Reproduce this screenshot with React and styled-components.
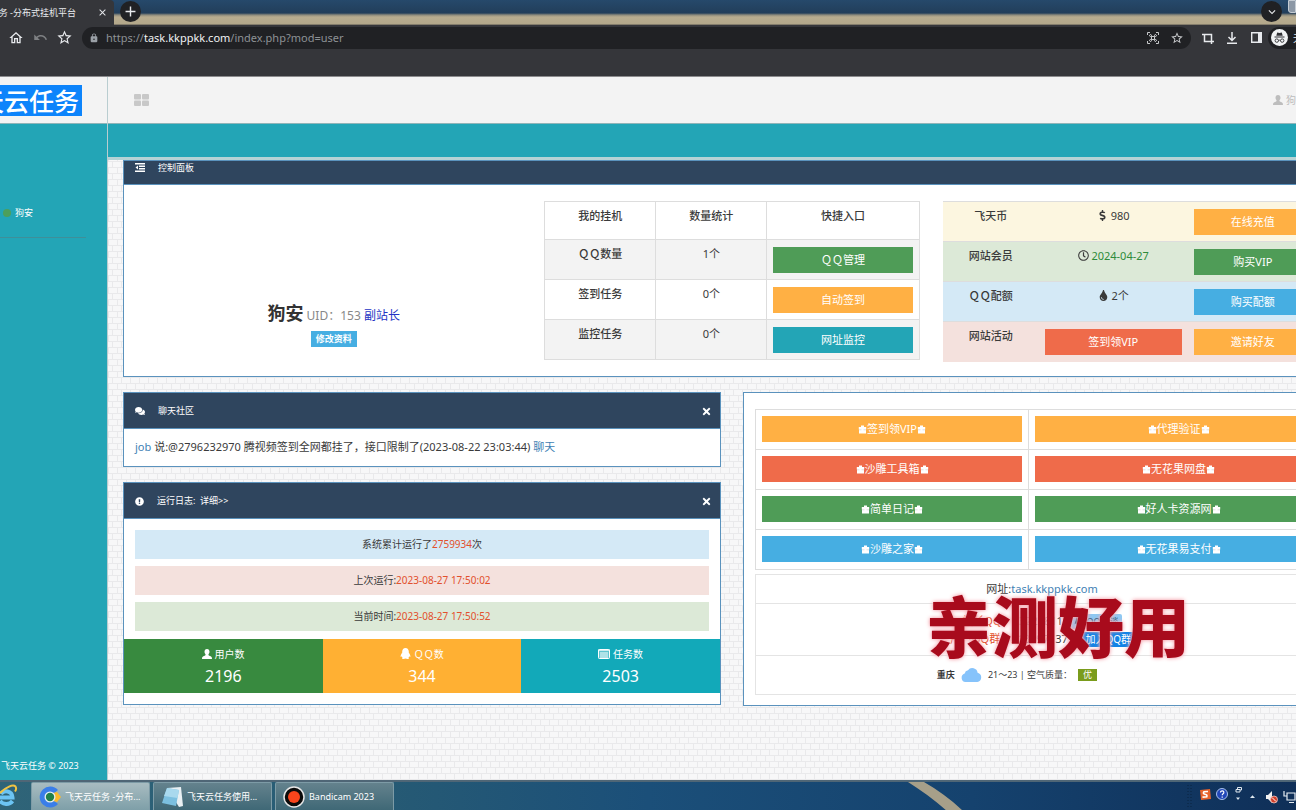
import styled, { createGlobalStyle } from "styled-components";
import {
    FaComments, FaDollarSign, FaExclamationCircle, FaQq, FaRegClock, FaTimes, FaTint
} from "react-icons/fa";
import {
    MdAdd, MdClose, MdExpandMore, MdLock, MdOutlineHome, MdStarBorder, MdUndo
} from "react-icons/md";

const colors = {
    teal: "#23a5b6",
    navy: "#2f455e",
    border: "#5a92bd",
    green: "#4f9c57",
    orange: "#ffb044",
    red: "#ef6b4a",
    blue: "#46aee2",
    link: "#3f7fb4"
}

const hangups = [
    { name: "ＱＱ数量", count: 1, action: "ＱＱ管理", color: colors.green },
    { name: "签到任务", count: 0, action: "自动签到", color: colors.orange },
    { name: "监控任务", count: 0, action: "网址监控", color: colors.teal }
]

const links = [
    [["签到领VIP", colors.orange], ["代理验证", colors.orange]],
    [["沙雕工具箱", colors.red], ["无花果网盘", colors.red]],
    [["简单日记", colors.green], ["好人卡资源网", colors.green]],
    [["沙雕之家", colors.blue], ["无花果易支付", colors.blue]]
]

export default function App() {
    return (
        <Screen>
            <GlobalStyle />
            <BrowserBar />
            <Page>
                <Sidebar />
                <Main />
            </Page>
            <Taskbar />
        </Screen>
    )
}

function BrowserBar() {
    return (
        <header>
            <TabStrip>
                <Tab>
                    <TabTitle><span>飞天云任务 -分布式挂机平台</span></TabTitle>
                    <PlainButton aria-label="关闭标签页"><MdClose size={11} /></PlainButton>
                </Tab>
                <RoundButton aria-label="新标签页"><MdAdd size={17} /></RoundButton>
                <StripEnd>
                    <RoundButton aria-label="搜索标签页"><MdExpandMore size={14} /></RoundButton>
                    <WindowButton aria-label="最小化" />
                </StripEnd>
            </TabStrip>
            <Toolbar>
                <ToolButton aria-label="主页"><MdOutlineHome size={16} /></ToolButton>
                <ToolButton aria-label="撤销" $dim><MdUndo size={15} /></ToolButton>
                <ToolButton aria-label="收藏夹"><MdStarBorder size={17} /></ToolButton>
                <AddressBar>
                    <MdLock size={10} />
                    <Url>https://<b>task.kkppkk.com</b>/index.php?mod=user</Url>
                    <ScanIcon />
                    <MdStarBorder size={14} />
                </AddressBar>
                <ToolButton aria-label="截图"><CropIcon /></ToolButton>
                <ToolButton aria-label="下载"><DownloadIcon /></ToolButton>
                <ToolButton aria-label="侧边栏"><SidePanelIcon /></ToolButton>
                <Profile><IncognitoIcon /><span>无痕</span></Profile>
            </Toolbar>
        </header>
    )
}

function Sidebar() {
    return (
        <Side>
            <LogoCell><Logo href="#"><span>飞天云任务</span></Logo></LogoCell>
            <SideBody>
                <SideUser><Dot />狗安</SideUser>
                <SideFooter>飞天云任务 © 2023</SideFooter>
            </SideBody>
        </Side>
    )
}

function Main() {
    return (
        <MainArea>
            <NavBar>
                <MenuButton aria-label="菜单"><GridIcon /></MenuButton>
                <NavUser href="#"><UserIcon size={10} /><span>狗安</span></NavUser>
            </NavBar>
            <TealBar />
            <Content>
                <Panel>
                    <PanelHead $short>
                        <IndentIcon />
                        <h2>控制面板</h2>
                    </PanelHead>
                    <Dashboard>
                        <ProfileCard />
                        <HangupTable />
                        <AccountTable />
                    </Dashboard>
                </Panel>
                <Columns>
                    <Stack>
                        <ChatPanel />
                        <LogPanel />
                    </Stack>
                    <LinksPanel />
                </Columns>
            </Content>
        </MainArea>
    )
}

function ProfileCard() {
    return (
        <Card>
            <UserLine><b>狗安</b> <span>UID：153</span> <a href="#">副站长</a></UserLine>
            <EditLink href="#">修改资料</EditLink>
        </Card>
    )
}

function HangupTable() {
    return (
        <Table $bordered>
            <thead>
                <HeadRow>
                    <NameCell $w={111}>我的挂机</NameCell>
                    <NameCell $w={111}>数量统计</NameCell>
                    <NameCell>快捷入口</NameCell>
                </HeadRow>
            </thead>
            <tbody>
                {hangups.map((item, i) => (
                    <Row key={item.name} $bg={i % 2 === 0 ? "#f3f3f3" : "#fff"}>
                        <NameCell>{item.name}</NameCell>
                        <ValueCell>{item.count}个</ValueCell>
                        <ActionCell><Button href="#" $bg={item.color}>{item.action}</Button></ActionCell>
                    </Row>
                ))}
            </tbody>
        </Table>
    )
}

function AccountTable() {
    return (
        <Table>
            <tbody>
                <Row $bg="#fcf6e0">
                    <NameCell $w={96}>飞天币</NameCell>
                    <ValueCell $w={149}><FaDollarSign size={11} /> 980</ValueCell>
                    <ActionCell><Button href="#" $bg={colors.orange}>在线充值</Button></ActionCell>
                </Row>
                <Row $bg="#dce9d7">
                    <NameCell>网站会员</NameCell>
                    <ValueCell><FaRegClock size={11} /> <Expiry>2024-04-27</Expiry></ValueCell>
                    <ActionCell><Button href="#" $bg={colors.green}>购买VIP</Button></ActionCell>
                </Row>
                <Row $bg="#d4e9f6">
                    <NameCell>ＱＱ配额</NameCell>
                    <ValueCell><FaTint size={11} /> 2个</ValueCell>
                    <ActionCell><Button href="#" $bg={colors.blue}>购买配额</Button></ActionCell>
                </Row>
                <Row $bg="#f4e1dd">
                    <NameCell>网站活动</NameCell>
                    <ActionCell><Button href="#" $bg={colors.red}>签到领VIP</Button></ActionCell>
                    <ActionCell><Button href="#" $bg={colors.orange}>邀请好友</Button></ActionCell>
                </Row>
            </tbody>
        </Table>
    )
}

function ChatPanel() {
    return (
        <Panel>
            <PanelHead>
                <FaComments size={10} />
                <h2>聊天社区</h2>
                <CloseButton aria-label="关闭"><FaTimes size={11} /></CloseButton>
            </PanelHead>
            <ChatLine>
                <a href="#">job</a> 说:@2796232970 腾视频签到全网都挂了，接口限制了(2023-08-22 23:03:44) <a href="#">聊天</a>
            </ChatLine>
        </Panel>
    )
}

function LogPanel() {
    return (
        <Panel>
            <PanelHead>
                <FaExclamationCircle size={9} />
                <h2>运行日志:&nbsp; 详细&gt;&gt;</h2>
                <CloseButton aria-label="关闭"><FaTimes size={11} /></CloseButton>
            </PanelHead>
            <Alerts>
                <Alert $bg="#d4e9f6">系统累计运行了<em>2759934</em>次</Alert>
                <Alert $bg="#f4e1dd">上次运行:<em>2023-08-27 17:50:02</em></Alert>
                <Alert $bg="#dce9d7">当前时间:<em>2023-08-27 17:50:52</em></Alert>
            </Alerts>
            <Stats>
                <Stat $bg="#388a3f"><p><UserIcon size={10} /> 用户数</p><strong>2196</strong></Stat>
                <Stat $bg="#ffb033"><p><PenguinIcon /> ＱＱ数</p><strong>344</strong></Stat>
                <Stat $bg="#12a9b9"><p><ListIcon /> 任务数</p><strong>2503</strong></Stat>
            </Stats>
        </Panel>
    )
}

function LinksPanel() {
    return (
        <Panel>
            <LinksBody>
                <Table $bordered>
                    <tbody>
                        {links.map((pair) => (
                            <Row key={pair[0][0]} $bg="#fff">
                                {pair.map(([label, color], i) => (
                                    <ActionCell key={label} $w={i === 0 ? 273 : undefined}>
                                        <Button href="#" $bg={color}><BagIcon />{label}<BagIcon /></Button>
                                    </ActionCell>
                                ))}
                            </Row>
                        ))}
                    </tbody>
                </Table>
                <Info>
                    <SiteRow>网址:<a href="#">task.kkppkk.com</a></SiteRow>
                    <ContactRow>
                        <div><em>站长QQ</em>：232228119<ChatBadge href="#"><FaQq size={10} /> QQ交谈</ChatBadge></div>
                        <div><em>用户QQ群</em>：213097137<JoinBadge href="#"><FaQq size={10} /> 加入QQ群</JoinBadge></div>
                    </ContactRow>
                    <WeatherRow>
                        <b>重庆</b>
                        <CloudIcon />
                        <span>21～23 | 空气质量：</span>
                        <Quality>优</Quality>
                    </WeatherRow>
                    <Stamp>亲测好用</Stamp>
                </Info>
            </LinksBody>
        </Panel>
    )
}

function Taskbar() {
    return (
        <Bar>
            <StartButton aria-label="Internet Explorer"><IeIcon /></StartButton>
            <TaskButton $active><ChromeIcon /><span>飞天云任务 -分布...</span></TaskButton>
            <TaskButton><NoteIcon /><span>飞天云任务使用...</span></TaskButton>
            <TaskButton><RecordIcon /><span>Bandicam 2023</span></TaskButton>
            <Streak viewBox="0 0 80 30" aria-hidden="true">
                <path d="M6 0h16c14 8 28 18 40 30H46C34 19 20 9 6 0z" fill="#a79f89" />
            </Streak>
            <Tray />
        </Bar>
    )
}

function Tray() {
    return (
        <TrayIcons viewBox="0 0 110 30" aria-label="通知区域">
            <path d="M2 3v22M5 3v22" stroke="#0a2440" strokeWidth="1" strokeDasharray="1 2" />
            <path d="M14 8l10-1 1 10-10 1z" fill="#e8622a" />
            <path d="M22 9.500l-4 .3q-1.500 2 1 2.400t1.800 2.500l-4.300.4" fill="none" stroke="#fff" strokeWidth="1.600" />
            <circle cx="36" cy="12" r="5.500" fill="#2147b8" stroke="#a9c2ea" />
            <path d="M34.500 10.500c0-2.300 3.500-2.200 3.300 0 0 1.300-1.600 1.300-1.600 2.700M36.200 14.500v1.300" fill="none" stroke="#fff" strokeWidth="1.200" />
            <path d="M50 7.500h4v2.500h-4zM51.500 7.500v-2h4v2.500h-1.500" fill="none" stroke="#dfe8ef" />
            <path d="M50 15.500h4l-2 2.500zM64 16h5l-2.500-2.800z" fill="#dfe8ef" />
            <path d="M80 13h2l4-4v12l-4-4h-2z" fill="#f1f1f1" />
            <circle cx="88" cy="17.500" r="3.500" fill="#d2402b" stroke="#f3c9c2" strokeWidth=".8" />
            <path d="M86 15.500l4 4" stroke="#fff" />
            <path d="M101 11h8v7h-8zM103 20.500h5M98 11v3h3M98 9v3" fill="none" stroke="#e6edf3" strokeWidth="1.200" />
        </TrayIcons>
    )
}

function GridIcon() {
    return (
        <svg width="15" height="12" viewBox="0 0 15 12" fill="#c8c8c8">
            <rect width="7" height="5.500" rx="1" />
            <rect x="8" width="7" height="5.500" rx="1" />
            <rect y="6.500" width="7" height="5.500" rx="1" />
            <rect x="8" y="6.500" width="7" height="5.500" rx="1" />
        </svg>
    )
}

function UserIcon({ size }) {
    return (
        <svg width={size} height={size} viewBox="0 0 10 10" fill="currentColor">
            <path d="M5 0c1.700 0 2.500 1.200 2.500 2.800 0 1.100-.5 2-1.100 2.600.1.900.5 1.200 1.700 1.600C9.500 7.500 10 8 10 10H0c0-2 .5-2.500 1.900-3 1.200-.4 1.600-.7 1.700-1.600C3 4.800 2.500 3.900 2.500 2.800 2.500 1.200 3.300 0 5 0z" />
        </svg>
    )
}

function PenguinIcon() {
    return (
        <svg width="11" height="11" viewBox="0 0 11 11" fill="#fff">
            <path d="M5.500 0c2 0 3.300 1.500 3.300 3.600v1.200C9.800 6 10.600 7.500 10.300 9c-.4 0-.8-.4-1-.7-.2.700-.5 1.100-.8 1.400.5.300.6.800.1 1.100-.7.300-2.400.2-3.100-.3-.7.500-2.400.6-3.100.3-.5-.3-.4-.8.1-1.100-.3-.3-.6-.7-.8-1.400-.2.300-.6.700-1 .7-.3-1.500.5-3 1.500-4.200V3.600C2.200 1.500 3.500 0 5.500 0z" />
        </svg>
    )
}

function ListIcon() {
    return (
        <svg width="12" height="10" viewBox="0 0 12 10">
            <rect x=".5" y=".5" width="11" height="9" rx=".8" fill="#ffffff55" stroke="#fff" />
            <path d="M0 1.200h12M2 4h8M2 6h8M2 8h8" stroke="#fff" />
        </svg>
    )
}

function IndentIcon() {
    return (
        <svg width="10" height="9" viewBox="0 0 10 9" fill="#fff">
            <path d="M0 0h10v1.500H0zM4 2.500h6V4H4zM4 5h6v1.500H4zM0 7.500h10V9H0zM3 2.500v4L.5 4.500z" />
        </svg>
    )
}

function BagIcon() {
    return (
        <svg width="9" height="9" viewBox="0 0 9 9" aria-hidden="true">
            <path d="M3 2V.5h3V2h2.200v2.500H8V8.500H1V4.500H.8V2z" fill="#fff" />
            <path d="M1 4.800h2.500M5.500 4.800H8" stroke="#00000033" strokeWidth=".6" />
        </svg>
    )
}

function CropIcon() {
    return (
        <svg width="12" height="12" viewBox="0 0 12 12" fill="none" stroke="#e8eaed" strokeWidth="1.500">
            <path d="M2.500 2.500v7H12M0 2.500h9.500V12" />
        </svg>
    )
}

function ScanIcon() {
    return (
        <svg width="12" height="12" viewBox="0 0 12 12" fill="none" stroke="#c6c8ca">
            <path d="M.5 3V.5H3M9 .5h2.500V3M11.500 9v2.500H9M3 11.500H.5V9" />
            <path d="M4.500 4.500H3.200a1 1 0 1 1 1.300-1.300zm3 0h1.300a1 1 0 1 0-1.300-1.300zm-3 3H3.200a1 1 0 1 0 1.300 1.300zm3 0h1.300a1 1 0 1 1-1.300 1.300zM4.500 4.500h3v3h-3z" />
        </svg>
    )
}

function DownloadIcon() {
    return (
        <svg width="10" height="12" viewBox="0 0 10 12" fill="none" stroke="#e8eaed" strokeWidth="1.500">
            <path d="M5 0v8M1.500 5L5 8.500 8.500 5M0 11.200h10" />
        </svg>
    )
}

function SidePanelIcon() {
    return (
        <svg width="11" height="11" viewBox="0 0 11 11">
            <path d="M.7.7h9.600v9.600H.7z" fill="none" stroke="#e8eaed" strokeWidth="1.400" />
            <path d="M7 0h4v11H7z" fill="#e8eaed" />
        </svg>
    )
}

function IncognitoIcon() {
    return (
        <svg width="17" height="17" viewBox="0 0 17 17">
            <circle cx="8.500" cy="8.500" r="8.500" fill="#f1f3f4" />
            <path d="M6.200 3.500l2.300.5 2.300-.5.900 3.300H5.300zM3.500 7.500h10v.9h-10z" fill="#303134" />
            <path d="M7.500 11.500q1-.7 2 0" fill="none" stroke="#303134" strokeWidth=".9" />
            <circle cx="5.800" cy="11.600" r="1.700" fill="none" stroke="#303134" strokeWidth=".9" />
            <circle cx="11.200" cy="11.600" r="1.700" fill="none" stroke="#303134" strokeWidth=".9" />
        </svg>
    )
}

function CloudIcon() {
    return (
        <svg width="21" height="15" viewBox="0 0 21 15">
            <path d="M4.500 15a4.300 4.300 0 0 1-.8-8.400A4 4 0 0 1 7 3.300a5.300 5.300 0 0 1 9.600 2.500A4.700 4.700 0 0 1 16.300 15z" fill="#86c3fb" />
        </svg>
    )
}

function IeIcon() {
    return (
        <svg width="18" height="24" viewBox="0 0 18 24" fill="none">
            <path d="M0 13.500h12.500C12 6 3.500 6 1 10M12.500 17C9 21.500 3 20.500 0 17" stroke="#6cc4f3" strokeWidth="4" />
            <path d="M0 9C6 3 13 0 15.500 2.500c1 1.500.5 3.500-.5 5" stroke="#f0c344" strokeWidth="2" />
        </svg>
    )
}

function ChromeIcon() {
    return (
        <svg width="22" height="22" viewBox="0 0 22 22">
            <path d="M19 4A10.500 10.500 0 1 0 19 18L14 14A4.500 4.500 0 1 1 14 8z" fill="#3a7ee8" />
            <path d="M14 7l4-1 4 5-4 5-4-1z" fill="#fbb92c" />
            <circle cx="11" cy="11" r="5.500" fill="#e6eef1" />
            <circle cx="11" cy="11" r="4.200" fill="#21804a" />
        </svg>
    )
}

function NoteIcon() {
    return (
        <svg width="22" height="20" viewBox="0 0 22 20">
            <path d="M6 1l14-1 2 19-4 1z" fill="#e9f0f3" />
            <path d="M6 1l12 2-3 16-14-3z" fill="#7cc0e0" />
            <path d="M6 1l12 2-1.500 8L3 9z" fill="#a9d9ee" />
        </svg>
    )
}

function RecordIcon() {
    return (
        <svg width="22" height="22" viewBox="0 0 22 22">
            <circle cx="11" cy="11" r="10" fill="#0b0b0b" stroke="#e6e6e6" strokeWidth="1.500" />
            <circle cx="11" cy="11" r="6" fill="#f8451c" />
        </svg>
    )
}

const bricks = encodeURIComponent(
    "<svg xmlns='http://www.w3.org/2000/svg' width='18' height='12'><path d='M0 .5h18M0 6.500h18M4.500 0v6M13.500 0v6M.5 6v6M9.500 6v6' stroke='#e9e9eb' fill='none'/></svg>"
)

const GlobalStyle = createGlobalStyle`
    * {
        box-sizing: border-box;
    }
    body {
        margin: 0;
        overflow: hidden;
        font-family: 'Noto Sans', 'Noto Sans CJK SC', sans-serif;
        font-size: 11px;
        line-height: 16px;
        color: #3a3a3a;
    }
    h2, p {
        margin: 0;
        font-size: inherit;
        font-weight: 400;
    }
    a {
        color: ${colors.link};
        text-decoration: none;
    }
    em {
        font-style: normal;
        color: #e2502c;
    }
    button {
        font: inherit;
        border: none;
        padding: 0;
        background: none;
    }
    svg {
        flex-shrink: 0;
    }
`
const Screen = styled.div`
    display: flex;
    flex-direction: column;
    height: 100vh;
    overflow: hidden;
`
const TabStrip = styled.div`
    display: flex;
    align-items: flex-start;
    height: 25px;
    background: linear-gradient(#26496b 0, #223e5a 13px, #8d8b7c 15px, #b8ac8f 17px, #b3a88b 24px, #55524d 25px);
`
const Tab = styled.div`
    display: flex;
    align-items: center;
    justify-content: space-between;
    width: 114px;
    height: 25px;
    padding-right: 6px;
    background: #35363a;
    border-radius: 0 4px 0 0;
    color: #e8eaed;
`
const TabTitle = styled.div`
    display: flex;
    justify-content: flex-end;
    width: 76px;
    overflow: hidden;
    white-space: nowrap;
    font-size: 9px;
`
const PlainButton = styled.button`
    display: flex;
    color: #e8eaed;
`
const RoundButton = styled.button`
    display: flex;
    align-items: center;
    justify-content: center;
    width: 21px;
    height: 21px;
    margin: 1px 0 0 6px;
    border-radius: 50%;
    background: #202124;
    color: #e8eaed;
`
const StripEnd = styled.div`
    display: flex;
    gap: 6px;
    margin-left: auto;
`
const WindowButton = styled.button`
    width: 8px;
    height: 13px;
    border-radius: 0 0 0 3px;
    background: #8c98a6;
    border: 1px solid #c4ccd4;
`
const Toolbar = styled.div`
    display: flex;
    align-items: center;
    height: 52px;
    padding: 0 0 26px 4px;
    background: #35363a;
    border-bottom: 1px solid #8b8b8d;
`
const ToolButton = styled.button`
    display: flex;
    align-items: center;
    justify-content: center;
    width: 24px;
    height: 24px;
    color: ${(props) => props.$dim ? "#7e8083" : "#e8eaed"};
`
const AddressBar = styled.div`
    display: flex;
    align-items: center;
    flex: 1;
    gap: 7px;
    height: 22px;
    margin: 0 5px 0 6px;
    padding: 0 7px;
    border-radius: 11px;
    background: #202124;
    color: #9aa0a6;

    svg:last-child {
        margin-left: 4px;
        color: #c6c8ca;
    }
`
const Url = styled.span`
    flex: 1;
    color: #8d9195;

    b {
        font-weight: 400;
        color: #f1f3f4;
    }
`
const Profile = styled.div`
    display: flex;
    align-items: center;
    gap: 5px;
    width: 28px;
    height: 22px;
    padding-left: 3px;
    overflow: hidden;
    border-radius: 11px 0 0 11px;
    background: #202124;
    color: #e8eaed;
    font-size: 10px;
    white-space: nowrap;
`
const Page = styled.div`
    display: flex;
    flex: 1;
    min-height: 0;
`
const Side = styled.aside`
    display: flex;
    flex-direction: column;
    width: 108px;
    border-right: 1px solid #b9cdd0;
`
const LogoCell = styled.div`
    height: 47px;
    padding-top: 8px;
    background: #f3f3f3;
    border-bottom: 1px solid #8fb4b8;
`
const Logo = styled.a`
    display: flex;
    justify-content: flex-end;
    align-items: center;
    width: 82px;
    height: 31px;
    padding-right: 3px;
    overflow: hidden;
    background: #0d84fb;
    color: #fff;
    font-size: 25px;
    font-weight: 500;
    white-space: nowrap;
`
const SideBody = styled.div`
    display: flex;
    flex-direction: column;
    justify-content: space-between;
    flex: 1;
    padding: 80px 0 6px;
    background: ${colors.teal};
    color: #fff;
    font-size: 9px;
`
const SideUser = styled.div`
    display: flex;
    align-items: center;
    gap: 4px;
    width: 86px;
    padding: 1px 0 16px 3px;
    border-bottom: 1px solid #3e8f99;
`
const Dot = styled.i`
    width: 8px;
    height: 8px;
    border-radius: 50%;
    background: #4c9f5c;
`
const SideFooter = styled.footer`
    padding-left: 1px;
    white-space: nowrap;
`
const MainArea = styled.main`
    flex: 1;
    min-width: 0;
    overflow: hidden;
    background: #f7f7f8 url("data:image/svg+xml,${bricks}");
`
const NavBar = styled.nav`
    display: flex;
    align-items: center;
    justify-content: space-between;
    height: 47px;
    padding-left: 26px;
    background: #f3f3f3;
    border-bottom: 1px solid #8fb4b8;
`
const MenuButton = styled.button`
    display: flex;
`
const NavUser = styled.a`
    display: flex;
    align-items: center;
    gap: 3px;
    width: 23px;
    overflow: hidden;
    color: #bdbdbd;
    font-size: 10px;
    white-space: nowrap;
`
const TealBar = styled.div`
    height: 36px;
    background: ${colors.teal};
    border-bottom: 3px solid #b5d3d5;
`
/* the page is wider than the window, so its right edge runs out of view */
const Content = styled.div`
    display: flex;
    flex-direction: column;
    gap: 15px;
    margin-right: -45px;
    padding-left: 15px;
`
const Panel = styled.section`
    display: flex;
    flex-direction: column;
    background: #fff;
    border: 1px solid ${colors.border};
`
const PanelHead = styled.div`
    display: flex;
    align-items: center;
    height: ${(props) => props.$short ? "24px" : "36px"};
    padding: ${(props) => props.$short ? "0 10px 10px 11px" : "2px 8px 0 11px"};
    border-bottom: 1px solid ${colors.border};
    background: ${colors.navy};
    color: #fff;
    font-size: 9px;

    h2 {
        flex: 1;
        margin-left: 13px;
    }
`
const CloseButton = styled.button`
    display: flex;
    color: #fff;
`
const Dashboard = styled.div`
    display: grid;
    grid-template-columns: repeat(3, 1fr);
    align-items: start;
    gap: 23px;
    padding: 16px 22px 14px;
`
const Card = styled.div`
    display: flex;
    flex-direction: column;
    align-items: center;
    gap: 3px;
    padding-top: 100px;
`
const UserLine = styled.div`
    font-size: 12px;
    line-height: 24px;
    color: #888;

    b {
        font-size: 18px;
        color: #333;
    }
    a {
        color: #2433c4;
    }
`
const EditLink = styled.a`
    padding: 0 5px;
    background: ${colors.blue};
    color: #fff;
    font-size: 9px;
    font-weight: 700;
`
const Table = styled.table`
    width: 100%;
    table-layout: fixed;
    border-collapse: collapse;
    text-align: center;

    th, td {
        border: ${(props) => props.$bordered ? "1px solid #ddd" : "none"};
        border-top: 1px solid #ddd;
    }
`
const HeadRow = styled.tr`
    height: 38px;
`
const Row = styled.tr`
    height: 40px;
    background: ${(props) => props.$bg};
`
const NameCell = styled.th`
    width: ${(props) => props.$w ? props.$w + "px" : "auto"};
    padding: 6px;
    vertical-align: top;
    font-weight: 500;
`
const ValueCell = styled.td`
    width: ${(props) => props.$w ? props.$w + "px" : "auto"};
    padding: 6px;
    vertical-align: top;

    svg {
        vertical-align: -1px;
    }
`
const Expiry = styled.time`
    color: #2e8b3a;
`
const ActionCell = styled.td`
    width: ${(props) => props.$w ? props.$w + "px" : "auto"};
    padding: 6px;
`
const Button = styled.a`
    display: flex;
    align-items: center;
    justify-content: center;
    height: 26px;
    background: ${(props) => props.$bg};
    color: #fff;
`
const Columns = styled.div`
    display: grid;
    grid-template-columns: 1fr 1fr;
    align-items: start;
    gap: 22px;
`
const Stack = styled.div`
    display: flex;
    flex-direction: column;
    gap: 15px;
`
const ChatLine = styled.p`
    padding: 10px 11px 11px;
`
const Alerts = styled.div`
    display: flex;
    flex-direction: column;
    gap: 7px;
    padding: 11px 11px 8px;
`
const Alert = styled.div`
    padding: 6px;
    line-height: 17px;
    background: ${(props) => props.$bg};
    font-size: 10px;
    text-align: center;
`
const Stats = styled.div`
    display: grid;
    grid-template-columns: repeat(3, 1fr);
    margin-bottom: 11px;
`
const Stat = styled.div`
    padding: 7px 0 3px;
    background: ${(props) => props.$bg};
    color: #fff;
    text-align: center;

    svg {
        vertical-align: -1px;
    }
    strong {
        display: block;
        font-size: 16px;
        font-weight: 400;
        line-height: 28px;
    }
    p {
        font-size: 10px;
    }
`
const LinksBody = styled.div`
    display: flex;
    flex-direction: column;
    gap: 4px;
    padding: 16px 11px 10px;
`
const Info = styled.div`
    position: relative;
    border: 1px solid #e4e4e4;
    text-align: center;
`
const SiteRow = styled.div`
    padding: 6px;
    border-bottom: 1px solid #e4e4e4;
`
const ContactRow = styled.div`
    padding: 8px 8px 7px;
    border-bottom: 1px solid #e4e4e4;
    line-height: 18px;

    div {
        height: 18px;
    }
`
const Badge = styled.a`
    display: inline-block;
    margin-left: 2px;
    padding: 0 3px;
    border-radius: 2px;
    line-height: 15px;

    svg {
        vertical-align: -1px;
    }
`
const ChatBadge = styled(Badge)`
    background: #8fc8f2;
    color: #24506f;
    font-size: 9px;
`
const JoinBadge = styled(Badge)`
    background: #1283e6;
    color: #fff;
    font-size: 10px;
`
const WeatherRow = styled.div`
    display: flex;
    align-items: center;
    justify-content: center;
    gap: 6px;
    height: 38px;
    padding-right: 50px;
    font-size: 9px;
`
const Quality = styled.span`
    padding: 0 5px;
    background: #7a9c1c;
    color: #fff;
    line-height: 12px;
`
/* slogan laid over the contact rows */
const Stamp = styled.strong`
    position: absolute;
    top: 15px;
    left: 170px;
    color: #a80b1c;
    font-family: 'Noto Sans CJK SC', sans-serif;
    font-size: 66px;
    font-weight: 900;
    line-height: 66px;
    white-space: nowrap;
    text-shadow: 0 0 4px #f28a96, 0 0 3px #fff;
`
const Bar = styled.footer`
    display: flex;
    gap: 3px;
    height: 30px;
    border-top: 2px solid #4f6676;
    background: linear-gradient(90deg, #2f6478 0, #265a74 30%, #1b4f79 50%, #15426e 75%, #0f2f58 100%);
    color: #fff;
`
const StartButton = styled.button`
    display: flex;
    align-items: center;
    width: 28px;
`
const TaskButton = styled.button`
    display: flex;
    align-items: center;
    gap: 4px;
    width: 119px;
    padding-left: 7px;
    overflow: hidden;
    border: 1px solid #7d9ba6;
    border-bottom: none;
    border-radius: 2px 2px 0 0;
    background: ${(props) => props.$active
        ? "linear-gradient(#a8bcc1, #7e9fa8)"
        : "linear-gradient(#64828d, #3f6876)"};
    color: #fff;
    font-size: 9px;
    white-space: nowrap;
`
const Streak = styled.svg`
    width: 80px;
    height: 30px;
    margin-left: auto;
`
const TrayIcons = styled.svg`
    width: 110px;
    height: 30px;
    margin-left: 201px;
`
